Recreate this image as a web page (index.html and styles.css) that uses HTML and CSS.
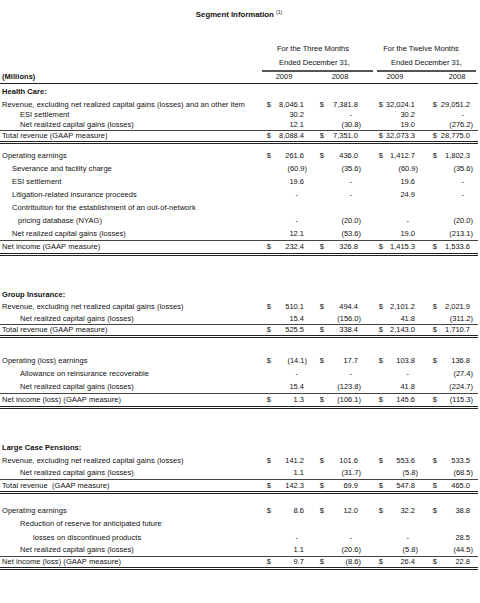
FILE: index.html
```html
<!DOCTYPE html>
<html lang="en">
<head>
  <meta charset="UTF-8">
  <title>Segment Information</title>
  <link rel="stylesheet" href="styles.css">
</head>
<body>
  <h1 class="title">Segment Information <sup>(1)</sup></h1>

  <div class="sheet">
    <div class="row head">
      <div class="lbl"></div>
      <div class="span-a">For the Three Months</div>
      <div class="span-b">For the Twelve Months</div>
    </div>
    <div class="row head">
      <div class="lbl"></div>
      <div class="span-a rule">Ended December 31,</div>
      <div class="span-b rule">Ended December 31,</div>
    </div>
    <div class="row head years">
      <div class="lbl strong">(Millions)</div>
      <div class="y1">2009</div>
      <div class="y2">2008</div>
      <div class="y3">2009</div>
      <div class="y4">2008</div>
    </div>

    <!-- Health Care -->
    <div class="row section hc">
      <div class="lbl">Health Care:</div>
    </div>
    <div class="row r11">
      <div class="lbl">Revenue, excluding net realized capital gains (losses) and an other item</div>
      <div class="d">$</div><div class="n">8,046.1</div>
      <div class="d">$</div><div class="n">7,381.8</div>
      <div class="d">$</div><div class="n">32,024.1</div>
      <div class="d">$</div><div class="n">29,051.2</div>
    </div>
    <div class="row r10">
      <div class="lbl in2">ESI settlement</div>
      <div class="d"></div><div class="n">30.2</div>
      <div class="d"></div><div class="n"><span class="nil">-</span></div>
      <div class="d"></div><div class="n">30.2</div>
      <div class="d"></div><div class="n"><span class="nil">-</span></div>
    </div>
    <div class="row r10">
      <div class="lbl in2">Net realized capital gains (losses)</div>
      <div class="d"></div><div class="n">12.1</div>
      <div class="d"></div><div class="n"><span class="neg">(30.8)</span></div>
      <div class="d"></div><div class="n">19.0</div>
      <div class="d"></div><div class="n"><span class="neg">(276.2)</span></div>
    </div>
    <div class="row total r10">
      <div class="lbl">Total revenue (GAAP measure)</div>
      <div class="d">$</div><div class="n">8,088.4</div>
      <div class="d">$</div><div class="n">7,351.0</div>
      <div class="d">$</div><div class="n">32,073.3</div>
      <div class="d">$</div><div class="n">28,775.0</div>
    </div>

    <div class="row gap5">
      <div class="lbl">Operating earnings</div>
      <div class="d">$</div><div class="n">261.6</div>
      <div class="d">$</div><div class="n">436.0</div>
      <div class="d">$</div><div class="n">1,412.7</div>
      <div class="d">$</div><div class="n">1,802.3</div>
    </div>
    <div class="row">
      <div class="lbl in1">Severance and facility charge</div>
      <div class="d"></div><div class="n"><span class="neg">(60.9)</span></div>
      <div class="d"></div><div class="n"><span class="neg">(35.6)</span></div>
      <div class="d"></div><div class="n"><span class="neg">(60.9)</span></div>
      <div class="d"></div><div class="n"><span class="neg">(35.6)</span></div>
    </div>
    <div class="row">
      <div class="lbl in1">ESI settlement</div>
      <div class="d"></div><div class="n">19.6</div>
      <div class="d"></div><div class="n"><span class="nil">-</span></div>
      <div class="d"></div><div class="n">19.6</div>
      <div class="d"></div><div class="n"><span class="nil">-</span></div>
    </div>
    <div class="row">
      <div class="lbl in1">Litigation-related insurance proceeds</div>
      <div class="d"></div><div class="n"><span class="nil">-</span></div>
      <div class="d"></div><div class="n"><span class="nil">-</span></div>
      <div class="d"></div><div class="n">24.9</div>
      <div class="d"></div><div class="n"><span class="nil">-</span></div>
    </div>
    <div class="row">
      <div class="lbl in1">Contribution for the establishment of an out-of-network</div>
    </div>
    <div class="row">
      <div class="lbl in3">pricing database (NYAG)</div>
      <div class="d"></div><div class="n"><span class="nil">-</span></div>
      <div class="d"></div><div class="n"><span class="neg">(20.0)</span></div>
      <div class="d"></div><div class="n"><span class="nil">-</span></div>
      <div class="d"></div><div class="n"><span class="neg">(20.0)</span></div>
    </div>
    <div class="row">
      <div class="lbl in1">Net realized capital gains (losses)</div>
      <div class="d"></div><div class="n">12.1</div>
      <div class="d"></div><div class="n"><span class="neg">(53.6)</span></div>
      <div class="d"></div><div class="n">19.0</div>
      <div class="d"></div><div class="n"><span class="neg">(213.1)</span></div>
    </div>
    <div class="row total r12">
      <div class="lbl">Net income (GAAP measure)</div>
      <div class="d">$</div><div class="n">232.4</div>
      <div class="d">$</div><div class="n">326.8</div>
      <div class="d">$</div><div class="n">1,415.3</div>
      <div class="d">$</div><div class="n">1,533.6</div>
    </div>

    <!-- Group Insurance -->
    <div class="row section gap33 r12">
      <div class="lbl">Group Insurance:</div>
    </div>
    <div class="row r12">
      <div class="lbl">Revenue, excluding net realized capital gains (losses)</div>
      <div class="d">$</div><div class="n">510.1</div>
      <div class="d">$</div><div class="n">494.4</div>
      <div class="d">$</div><div class="n">2,101.2</div>
      <div class="d">$</div><div class="n">2,021.9</div>
    </div>
    <div class="row r11">
      <div class="lbl in2">Net realized capital gains (losses)</div>
      <div class="d"></div><div class="n">15.4</div>
      <div class="d"></div><div class="n"><span class="neg">(156.0)</span></div>
      <div class="d"></div><div class="n">41.8</div>
      <div class="d"></div><div class="n"><span class="neg">(311.2)</span></div>
    </div>
    <div class="row total r10">
      <div class="lbl">Total revenue (GAAP measure)</div>
      <div class="d">$</div><div class="n">525.5</div>
      <div class="d">$</div><div class="n">338.4</div>
      <div class="d">$</div><div class="n">2,143.0</div>
      <div class="d">$</div><div class="n">1,710.7</div>
    </div>

    <div class="row gap17 r12">
      <div class="lbl">Operating (loss) earnings</div>
      <div class="d">$</div><div class="n"><span class="neg">(14.1)</span></div>
      <div class="d">$</div><div class="n">17.7</div>
      <div class="d">$</div><div class="n">103.8</div>
      <div class="d">$</div><div class="n">136.8</div>
    </div>
    <div class="row">
      <div class="lbl in2">Allowance on reinsurance recoverable</div>
      <div class="d"></div><div class="n"><span class="nil">-</span></div>
      <div class="d"></div><div class="n"><span class="nil">-</span></div>
      <div class="d"></div><div class="n"><span class="nil">-</span></div>
      <div class="d"></div><div class="n"><span class="neg">(27.4)</span></div>
    </div>
    <div class="row">
      <div class="lbl in2">Net realized capital gains (losses)</div>
      <div class="d"></div><div class="n">15.4</div>
      <div class="d"></div><div class="n"><span class="neg">(123.8)</span></div>
      <div class="d"></div><div class="n">41.8</div>
      <div class="d"></div><div class="n"><span class="neg">(224.7)</span></div>
    </div>
    <div class="row total r12">
      <div class="lbl">Net income (loss) (GAAP measure)</div>
      <div class="d">$</div><div class="n">1.3</div>
      <div class="d">$</div><div class="n"><span class="neg">(106.1)</span></div>
      <div class="d">$</div><div class="n">145.6</div>
      <div class="d">$</div><div class="n"><span class="neg">(115.3)</span></div>
    </div>

    <!-- Large Case Pensions -->
    <div class="row section gap33 r12">
      <div class="lbl">Large Case Pensions:</div>
    </div>
    <div class="row">
      <div class="lbl">Revenue, excluding net realized capital gains (losses)</div>
      <div class="d">$</div><div class="n">141.2</div>
      <div class="d">$</div><div class="n">101.6</div>
      <div class="d">$</div><div class="n">553.6</div>
      <div class="d">$</div><div class="n">533.5</div>
    </div>
    <div class="row r12">
      <div class="lbl in2">Net realized capital gains (losses)</div>
      <div class="d"></div><div class="n">1.1</div>
      <div class="d"></div><div class="n"><span class="neg">(31.7)</span></div>
      <div class="d"></div><div class="n"><span class="neg">(5.8)</span></div>
      <div class="d"></div><div class="n"><span class="neg">(68.5)</span></div>
    </div>
    <div class="row total r11">
      <div class="lbl">Total revenue&nbsp; (GAAP measure)</div>
      <div class="d">$</div><div class="n">142.3</div>
      <div class="d">$</div><div class="n">69.9</div>
      <div class="d">$</div><div class="n">547.8</div>
      <div class="d">$</div><div class="n">465.0</div>
    </div>

    <div class="row gap11 r12">
      <div class="lbl">Operating earnings</div>
      <div class="d">$</div><div class="n">8.6</div>
      <div class="d">$</div><div class="n">12.0</div>
      <div class="d">$</div><div class="n">32.2</div>
      <div class="d">$</div><div class="n">38.8</div>
    </div>
    <div class="row r14">
      <div class="lbl in2">Reduction of reserve for anticipated future</div>
    </div>
    <div class="row">
      <div class="lbl in4">losses on discontinued products</div>
      <div class="d"></div><div class="n"><span class="nil">-</span></div>
      <div class="d"></div><div class="n"><span class="nil">-</span></div>
      <div class="d"></div><div class="n"><span class="nil">-</span></div>
      <div class="d"></div><div class="n">28.5</div>
    </div>
    <div class="row r12">
      <div class="lbl in2">Net realized capital gains (losses)</div>
      <div class="d"></div><div class="n">1.1</div>
      <div class="d"></div><div class="n"><span class="neg">(20.6)</span></div>
      <div class="d"></div><div class="n"><span class="neg">(5.8)</span></div>
      <div class="d"></div><div class="n"><span class="neg">(44.5)</span></div>
    </div>
    <div class="row total r10">
      <div class="lbl">Net income (loss) (GAAP measure)</div>
      <div class="d">$</div><div class="n">9.7</div>
      <div class="d">$</div><div class="n"><span class="neg">(8.6)</span></div>
      <div class="d">$</div><div class="n">26.4</div>
      <div class="d">$</div><div class="n">22.8</div>
    </div>
  </div>
</body>
</html>
```

FILE: styles.css
```css
body {
  margin: 0;
  background: #fff;
  color: #111;
  font-family: "Liberation Sans", Arial, sans-serif;
  font-size: 7.5px;
}

.title {
  margin: 8px 0 0;
  width: 478px;
  height: 14px;
  line-height: 14px;
  font-size: 7.8px;
  font-weight: bold;
  text-align: center;
}
.title sup {
  font-size: 5px;
  font-weight: normal;
  vertical-align: 3px;
  line-height: 0;
}

.sheet {
  width: 478px;
  margin-top: 20px;
}

/* one line of the statement */
.row {
  display: grid;
  grid-template-columns: 262px 10px 38px 15px 39px 20px 37px 17px 40px;
  height: 13px;
  line-height: 13px;
  white-space: nowrap;
}
.row.r10 { height: 10px; line-height: 10px; }
.row.r11 { height: 11px; line-height: 11px; }
.row.r12 { height: 12px; line-height: 12px; }
.row.r14 { height: 14px; line-height: 14px; }

.lbl {
  padding-left: 2px;
  letter-spacing: 0.05px;
}
.lbl.in1 { padding-left: 12px; }
.lbl.in2 { padding-left: 20px; }
.lbl.in3 { padding-left: 18px; }
.lbl.in4 { padding-left: 33px; }
.strong { font-weight: bold; }

.d {
  text-align: right;
  padding-right: 1px;
}
.n {
  text-align: right;
  padding-right: 6px;
}
.n:last-child {
  padding-right: 8px;
}
.neg {
  display: inline-block;
  margin-right: -3px;
}
.nil {
  display: inline-block;
  margin-right: 6px;
}

/* column headings */
.head {
  height: 14px;
  line-height: 14px;
}
.span-a {
  grid-column: 2 / 6;
  text-align: center;
}
.span-b {
  grid-column: 6 / 10;
  text-align: center;
}
.span-a.rule {
  border-bottom: 2px solid #555;
  margin-right: -9px;
  padding-right: 6px;
}
.span-b.rule {
  border-bottom: 2px solid #555;
  margin-left: 13px;
  margin-right: 2px;
}
.years {
  height: 13px;
  line-height: 13px;
  border-bottom: 1px solid #222;
}
.y1 { grid-column: 2 / 4; text-align: center; padding-right: 4px; }
.y2 { grid-column: 4 / 6; text-align: center; padding-left: 6px; }
.y3 { grid-column: 6 / 8; text-align: center; padding-left: 5px; }
.y4 { grid-column: 8 / 10; text-align: center; padding-left: 15px; }

.section {
  font-weight: bold;
}
.section.hc {
  height: 15px;
  line-height: 15px;
}

.total {
  border-top: 1px solid #444;
  border-bottom: 3px double #222;
}

.gap5 { margin-top: 5px; }
.gap11 { margin-top: 11px; }
.gap17 { margin-top: 17px; }
.gap33 { margin-top: 33px; }
```
